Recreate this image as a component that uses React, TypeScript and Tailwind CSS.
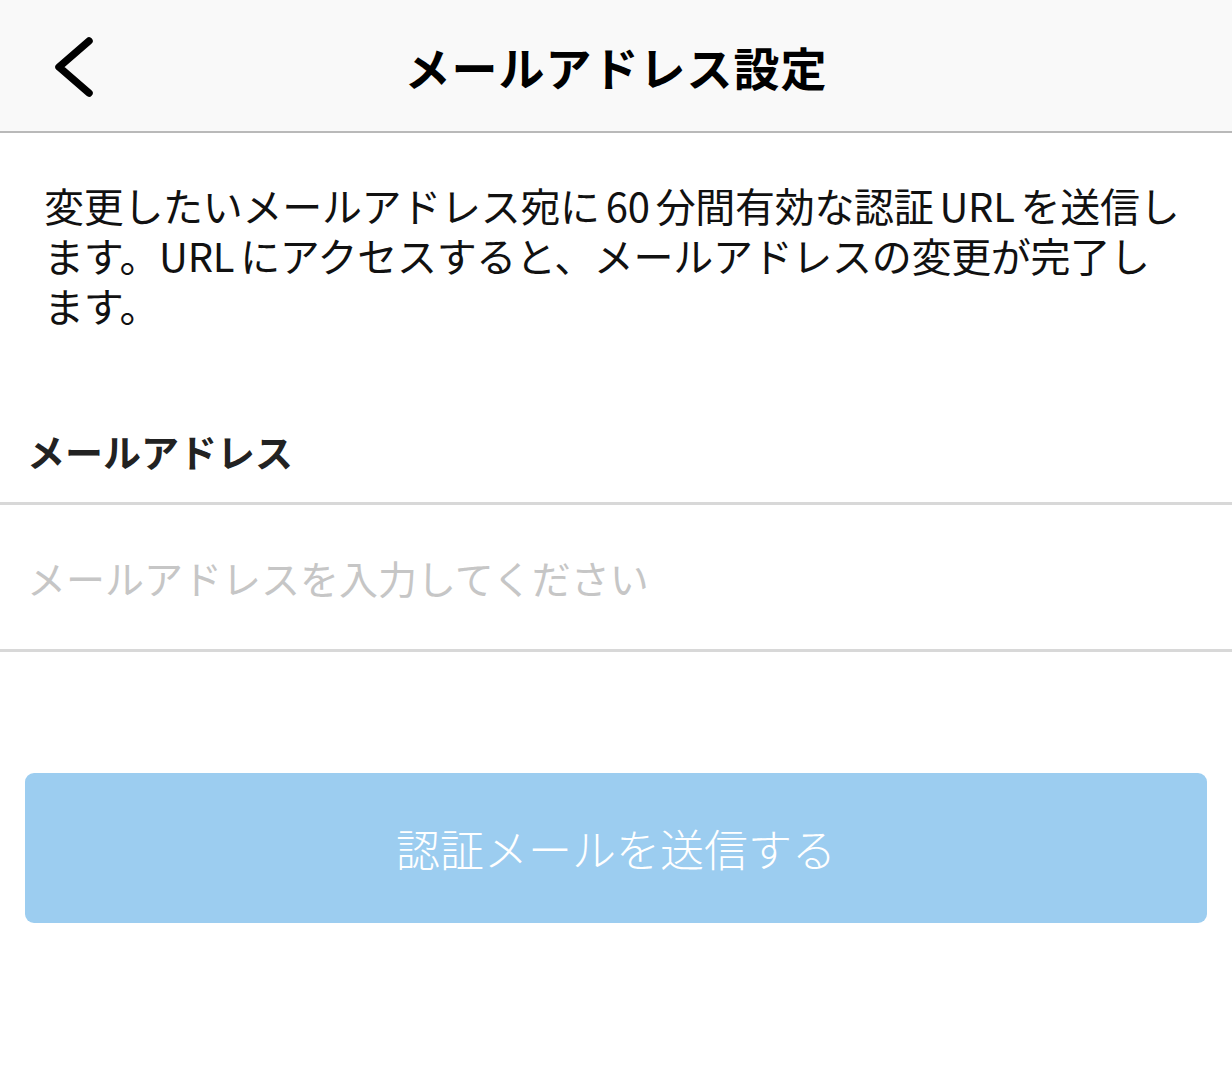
import React from "react";

const Gap = () => <span className="inline-block w-[6px]" />;

export default function App() {
  const font = { fontFamily: '"Noto Sans CJK JP", "Noto Sans", sans-serif' };
  return (
    <div className="w-[1232px] h-[1077px] bg-white overflow-hidden" style={font}>
      <header className="h-[133px] bg-[#f9f9f9] border-b-2 border-[#b9b9b9] flex items-center relative">
        <button className="absolute left-[50px] top-[30px] w-[50px] h-[74px]">
          <svg width="50" height="74" viewBox="0 0 50 74" fill="none">
            <path d="M39 11 L9 37 L39 63" stroke="#000" strokeWidth="7.5" strokeLinecap="round" strokeLinejoin="round" />
          </svg>
        </button>
        <h1 className="w-full text-center text-[46px] font-bold text-black leading-none tracking-[1px]">
          メールアドレス設定
        </h1>
      </header>

      <div className="px-[44px] pt-[47px] text-[40px] leading-[50px] text-[#111] tracking-[-0.3px]">
        <div className="whitespace-nowrap">
          変更したいメールアドレス宛に<Gap />60<Gap />分間有効な認証<Gap />URL<Gap />を送信し
        </div>
        <div className="whitespace-nowrap">
          ます。URL<Gap />にアクセスすると、メールアドレスの変更が完了し
        </div>
        <div className="whitespace-nowrap">ます。</div>
      </div>

      <div className="mt-[96px] px-[27px] h-[50px] flex items-center">
        <span className="text-[38px] font-bold text-[#222] leading-none">メールアドレス</span>
      </div>

      <div className="mt-[26px] border-t-[3px] border-b-[3px] border-[#d8d8d8] h-[150px] flex items-center px-[27px]">
        <input
          className="w-full text-[39px] text-[#222] placeholder:text-[#c6c6c6] outline-none bg-transparent"
          placeholder="メールアドレスを入力してください"
          style={font}
        />
      </div>

      <div className="px-[25px] pt-[121px]">
        <button className="w-full h-[150px] rounded-[9px] bg-[#9ccdf0] text-white text-[44px] font-light flex items-center justify-center" style={font}>
          認証メールを送信する
        </button>
      </div>
    </div>
  );
}
